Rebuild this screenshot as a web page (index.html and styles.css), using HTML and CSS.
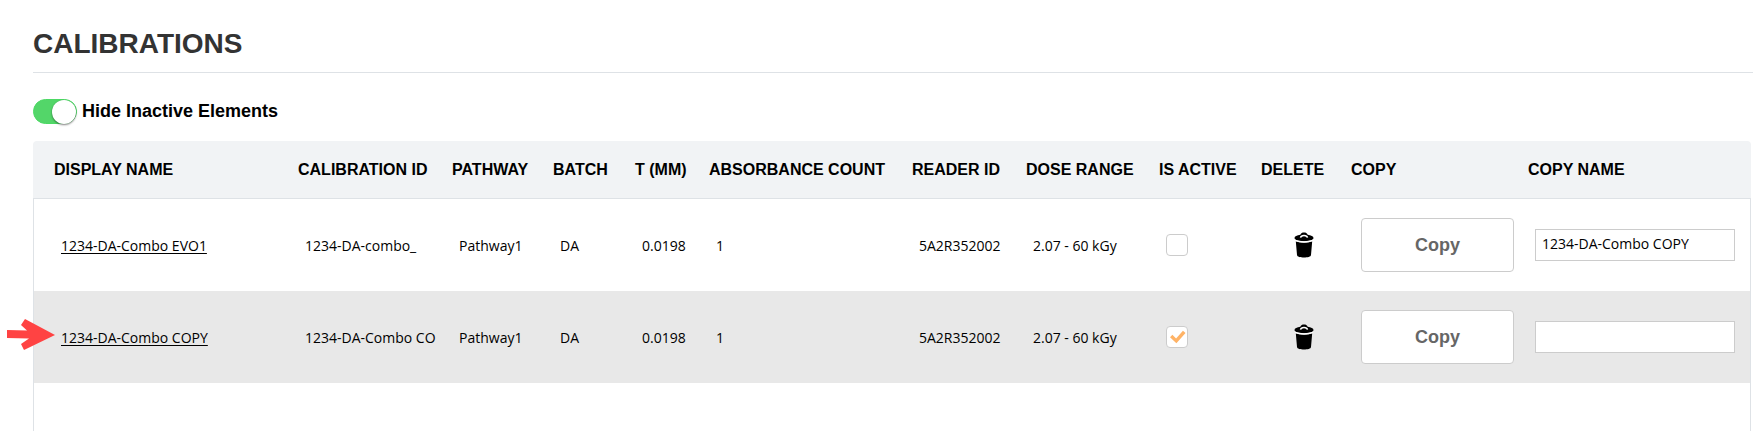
FILE: index.html
```html
<!DOCTYPE html>
<html lang="en">
<head>
    <meta charset="UTF-8">
    <meta name="viewport" content="width=device-width, initial-scale=1.0">
    <title>Calibrations</title>
    <link rel="stylesheet" href="styles.css">
</head>
<body>

    <!-- Trash icon, shared by the rows -->
    <svg class="sprite" aria-hidden="true">
        <symbol id="trash" viewBox="0 0 20 26">
            <path d="M6.3 2.8 C7 .9 8.3 .5 10 .5 S13 .9 13.7 2.8 C17 3.300 19.500 4.400 19.500 6 C19.500 8 15 9.300 10 9.300 S.5 8 .5 6 C.5 4.400 3 3.300 6.300 2.800 Z"/>
            <path d="M1.800 9.200 C6.500 10.900 13.500 10.900 18.200 9.200 L17 23 C16.900 24.800 13.500 25.500 10 25.500 S3.100 24.800 3 23 Z"/>
            <path class="trash-gap" d="M1 8.400 C6 10.400 14 10.400 19 8.400"/>
            <path class="trash-handle" d="M6.500 5.600 Q7 3.500 10 3.500 T13.500 5.600"/>
        </symbol>
    </svg>

    <h1 class="page-title">CALIBRATIONS</h1>

    <div class="toolbar">
        <input type="checkbox" class="switch" id="hideInactive" checked>
        <label for="hideInactive">Hide Inactive Elements</label>
    </div>

    <table class="grid">
        <colgroup>
            <col>
            <col class="col-id">
            <col class="col-pathway">
            <col class="col-batch">
            <col class="col-thickness">
            <col class="col-count">
            <col class="col-reader">
            <col class="col-dose">
            <col class="col-active">
            <col class="col-delete">
            <col class="col-copy">
            <col class="col-copy-name">
        </colgroup>
        <thead>
            <tr>
                <th>DISPLAY NAME</th>
                <th>CALIBRATION ID</th>
                <th>PATHWAY</th>
                <th>BATCH</th>
                <th>T (MM)</th>
                <th>ABSORBANCE COUNT</th>
                <th>READER ID</th>
                <th>DOSE RANGE</th>
                <th>IS ACTIVE</th>
                <th>DELETE</th>
                <th>COPY</th>
                <th>COPY NAME</th>
            </tr>
        </thead>
        <tbody>
            <tr>
                <td class="name"><a href="#">1234-DA-Combo EVO1</a></td>
                <td class="clip">1234-DA-combo_</td>
                <td>Pathway1</td>
                <td>DA</td>
                <td>0.0198</td>
                <td>1</td>
                <td>5A2R352002</td>
                <td>2.07 - 60 kGy</td>
                <td class="control"><input type="checkbox" class="check" aria-label="Is active"></td>
                <td class="control center"><button class="delete-btn" aria-label="Delete"><svg><use href="#trash"/></svg></button></td>
                <td class="control center"><button class="copy-btn">Copy</button></td>
                <td class="control"><input type="text" class="copy-name" aria-label="Copy name" value="1234-DA-Combo COPY"></td>
            </tr>
            <tr>
                <td class="name">
                    <svg class="pointer" viewBox="0 0 50 32" aria-hidden="true"><path d="M1 12 L21 12.500 L15 7 L19 1 L49 17 L18 32 L15 26 L23 20.500 L1 20 Z"/></svg>
                    <a href="#">1234-DA-Combo COPY</a>
                </td>
                <td class="clip">1234-DA-Combo CO</td>
                <td>Pathway1</td>
                <td>DA</td>
                <td>0.0198</td>
                <td>1</td>
                <td>5A2R352002</td>
                <td>2.07 - 60 kGy</td>
                <td class="control"><input type="checkbox" class="check" aria-label="Is active" checked></td>
                <td class="control center"><button class="delete-btn" aria-label="Delete"><svg><use href="#trash"/></svg></button></td>
                <td class="control center"><button class="copy-btn">Copy</button></td>
                <td class="control"><input type="text" class="copy-name" aria-label="Copy name"></td>
            </tr>
        </tbody>
    </table>
    <div class="grid-rest"></div>

</body>
</html>
```
FILE: styles.css
```css
* {
    box-sizing: border-box;
}

body {
    display: flex;
    flex-direction: column;
    min-height: 100vh;
    margin: 0;
    padding: 24px 4px 0 33px;
    background-color: #fff;
    color: #000;
    font-family: "Liberation Sans", Arial, sans-serif;
}

.sprite {
    display: none;
}

.page-title {
    margin: 0 -2px 0 0;
    padding-bottom: 8px;
    border-bottom: 1px solid #dee2e6;
    color: #333;
    font-size: 28px;
    line-height: 40px;
}

.toolbar {
    display: flex;
    align-items: center;
    gap: 5px;
    margin: 26px 0 17px;
    font-size: 18px;
    font-weight: bold;
    line-height: 25px;
}

/* Toggle switch */
.switch {
    appearance: none;
    display: flex;
    width: 44px;
    height: 25px;
    margin: 0;
    border: 1px solid #4cd964;
    border-radius: 13px;
    background-color: #53d669;
}

.switch::before {
    content: "";
    width: 24px;
    height: 24px;
    border-radius: 50%;
    background-color: #fff;
    box-shadow: 0 1px 2px rgba(0, 0, 0, 0.5);
}

.switch:checked {
    justify-content: flex-end;
}

/* Grid */
.grid {
    width: 100%;
    table-layout: fixed;
    border-spacing: 0;
}

.col-id { width: 154px; }
.col-pathway { width: 101px; }
.col-batch { width: 82px; }
.col-thickness { width: 74px; }
.col-count { width: 203px; }
.col-reader { width: 114px; }
.col-dose { width: 133px; }
.col-active { width: 102px; }
.col-delete { width: 90px; }
.col-copy { width: 177px; }
.col-copy-name { width: 232px; }

.grid th {
    height: 58px;
    padding: 0 0 0 9px;
    border-bottom: 1px solid #dee2e6;
    background-color: #f1f3f5;
    font-size: 16px;
    text-align: left;
    white-space: nowrap;
}

.grid th:first-child {
    padding-left: 21px;
    border-top-left-radius: 4px;
}

.grid th:last-child {
    border-top-right-radius: 4px;
}

.grid td {
    height: 92px;
    padding: 2px 0 0 16px;
    font-family: "Open Sans", "Segoe UI", sans-serif;
    font-size: 14px;
    line-height: 20px;
    white-space: nowrap;
}

.grid td:last-child {
    border-right: 1px solid #dee2e6;
}

.grid tbody tr:nth-child(even) {
    background-color: #e8e8e8;
}

.grid .name {
    position: relative;
    padding-left: 27px;
    border-left: 1px solid #dee2e6;
}

.grid .clip {
    overflow: hidden;
}

.grid .control {
    padding-top: 0;
}

.grid .center {
    padding-right: 2px;
    text-align: center;
}

.name a {
    color: #000;
    text-underline-offset: 2px;
}

/* Arrow marking the new row */
.pointer {
    position: absolute;
    left: -28px;
    top: 27px;
    width: 50px;
    height: 32px;
    fill: #ff4343;
}

.check {
    appearance: none;
    display: block;
    width: 22px;
    height: 22px;
    margin: 0;
    border: 1px solid #ccc;
    border-radius: 4px;
    background-color: #fff;
}

.check:checked::before {
    content: "";
    display: block;
    width: 16px;
    height: 14px;
    margin: 3px;
    background-color: #ffb366;
    clip-path: polygon(0 52%, 15% 34%, 38% 60%, 81% 6%, 97% 22%, 40% 94%);
}

.delete-btn {
    display: inline-flex;
    padding: 0;
    border: none;
    background: none;
    cursor: pointer;
    vertical-align: middle;
}

.delete-btn svg {
    width: 20px;
    height: 26px;
}

.trash-gap,
.trash-handle {
    fill: none;
    stroke: #fff;
    stroke-width: 1.5;
}

.copy-btn {
    width: 153px;
    height: 54px;
    padding: 0;
    border: 1px solid #ccc;
    border-radius: 4px;
    background-color: #fff;
    color: #666;
    font-family: "Liberation Sans", Arial, sans-serif;
    font-size: 18px;
    font-weight: bold;
    cursor: pointer;
    vertical-align: middle;
}

.copy-name {
    display: block;
    width: 200px;
    height: 32px;
    padding: 0 6px 3px;
    border: 1px solid #ccc;
    background-color: #fff;
    color: #000;
    font: inherit;
}

/* Empty part of the grid below the last row */
.grid-rest {
    flex: 1;
    border: solid #dee2e6;
    border-width: 0 1px;
}
```
